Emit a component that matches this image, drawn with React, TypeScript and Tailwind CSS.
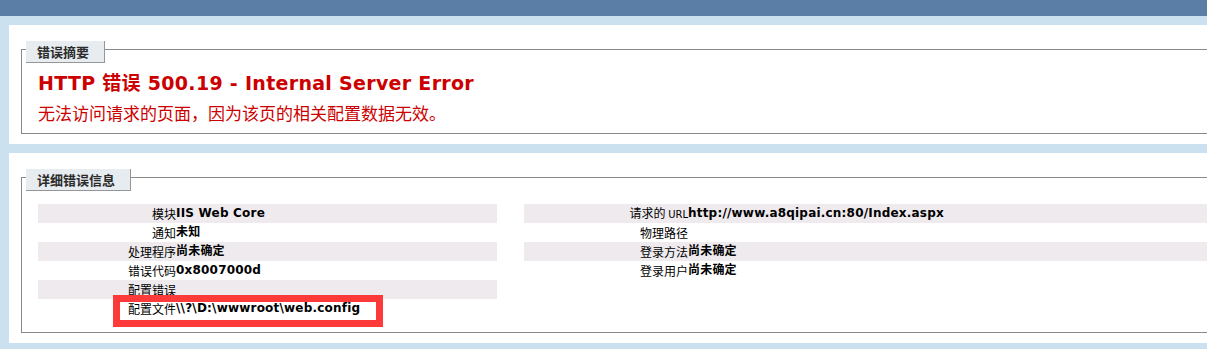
import React from "react";

const font = "font-['DejaVu_Sans','Noto_Sans_CJK_SC',sans-serif]";

type Row = { label: React.ReactNode; value?: React.ReactNode; alt: boolean };

function Legend({ children }: { children: React.ReactNode }) {
  return (
    <div className="ml-[4px] -mt-[9px] w-fit h-[22px] bg-[#e7ecf0] border-r border-b border-[#969696] pl-[11px] pr-[15px] text-[13px] leading-[21px] font-bold text-[#2b2b2b] font-['Noto_Sans_CJK_SC',sans-serif]">
      {children}
    </div>
  );
}

function Table({ rows, labelW }: { rows: Row[]; labelW: string }) {
  return (
    <div className="flex flex-col">
      {rows.map((r, i) => (
        <div
          key={i}
          className={`flex h-[19px] items-center text-[12px] leading-[19px] text-black ${r.alt ? "bg-[#eeeaee]" : "bg-white"}`}
        >
          <div className={`${labelW} shrink-0 text-right whitespace-nowrap font-['Noto_Sans_CJK_SC',sans-serif]`}>
            {r.label}
          </div>
          <div className="font-bold whitespace-nowrap tracking-[0.2px] font-['DejaVu_Sans','Noto_Sans_CJK_SC',sans-serif]">
            {r.value}
          </div>
        </div>
      ))}
    </div>
  );
}

export default function App() {
  const left: Row[] = [
    { label: "模块", value: "IIS Web Core", alt: true },
    { label: "通知", value: "未知", alt: false },
    { label: "处理程序", value: "尚未确定", alt: true },
    { label: "错误代码", value: "0x8007000d", alt: false },
    { label: "配置错误", alt: true },
    { label: "配置文件", value: "\\\\?\\D:\\wwwroot\\web.config", alt: false },
  ];
  const right: Row[] = [
    {
      label: (
        <>
          请求的 <span className="text-[10px] font-['DejaVu_Sans',sans-serif]">URL</span>
        </>
      ),
      value: "http://www.a8qipai.cn:80/Index.aspx",
      alt: true,
    },
    { label: "物理路径", alt: false },
    { label: "登录方法", value: "尚未确定", alt: true },
    { label: "登录用户", value: "尚未确定", alt: false },
  ];

  return (
    <div className={`w-[1207px] h-[349px] overflow-hidden bg-[#cbe1ef] ${font}`}>
      <div className="h-[16px] bg-[#5b7ea6]"></div>
      <div className="pl-[9px] pt-[9px]">
        {/* summary */}
        <div className="h-[119px] bg-white pt-[24px]">
          <div className="ml-[12px] h-[85px] border border-r-0 border-[#8a8a8a]">
            <Legend>错误摘要</Legend>
            <div className="pl-[16px]">
              <div className="mt-[8px] text-[19px] leading-[24px] font-bold tracking-[0.3px] text-[#cc0000] whitespace-nowrap">
                HTTP 错误 500.19 - Internal Server Error
              </div>
              <div className="text-[17px] leading-[20px] mt-[8px] text-[#cc0000] whitespace-nowrap font-['Noto_Sans_CJK_SC',sans-serif]">
                无法访问请求的页面，因为该页的相关配置数据无效。
              </div>
            </div>
          </div>
        </div>
        {/* details */}
        <div className="relative mt-[9px] h-[190px] bg-white pt-[24px]">
          <div className="ml-[12px] h-[156px] border border-r-0 border-[#8a8a8a]">
            <Legend>详细错误信息</Legend>
            <div className="mt-[13px] pl-[16px] flex gap-[27px]">
              <div className="w-[459px] shrink-0">
                <Table rows={left} labelW="w-[138px]" />
              </div>
              <div className="flex-1">
                <Table rows={right} labelW="w-[164px]" />
              </div>
            </div>
          </div>
          <div className="absolute left-[104px] top-[142px] w-[270px] h-[32px] border-[7px] border-[#fc3a3a]"></div>
        </div>
      </div>
    </div>
  );
}
